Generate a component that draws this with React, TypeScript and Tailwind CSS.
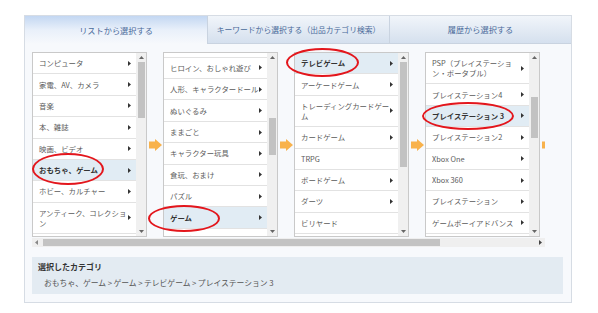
import React from "react";

type Item = { lines: string[]; arrow?: boolean; sel?: boolean };

function Tri() {
  return (
    <svg width="3" height="5" viewBox="0 0 3 5" className="shrink-0">
      <polygon points="0,0 3,2.5 0,5" fill="#333" />
    </svg>
  );
}

function Arrow() {
  return (
    <svg width="13" height="12" viewBox="0 0 13 12" className="shrink-0">
      <polygon points="0,2.5 6,2.5 6,0 13,6 6,12 6,9.5 0,9.5" fill="#f8b24c" />
    </svg>
  );
}

function Row({ it }: { it: Item }) {
  return (
    <div
      className={
        it.sel
          ? "flex items-center border-b border-[#e2e2e2] bg-[#e1ecf4] py-[5.2px] pl-[6px] pr-[5px] text-[7.4px] leading-[10px] font-bold text-[#333]"
          : "flex items-center border-b border-[#e2e2e2] bg-white py-[5.2px] pl-[6px] pr-[5px] text-[7.4px] leading-[10px] text-[#5a5a5a]"
      }
    >
      <div className="flex-1 whitespace-nowrap">
        {it.lines.map((l, i) => (
          <div key={i}>{l}</div>
        ))}
      </div>
      {it.arrow !== false && <Tri />}
    </div>
  );
}

function VScroll({ thumbClass }: { thumbClass: string }) {
  return (
    <div className="flex w-[10px] shrink-0 flex-col bg-[#f0f0f0]">
      <div className="flex h-[9px] items-center justify-center">
        <svg width="5" height="3" viewBox="0 0 5 3">
          <polygon points="0,3 2.5,0 5,3" fill="#666" />
        </svg>
      </div>
      <div className="flex flex-1 justify-center">
        <div className={thumbClass} />
      </div>
      <div className="flex h-[9px] items-center justify-center">
        <svg width="5" height="3" viewBox="0 0 5 3">
          <polygon points="0,0 2.5,3 5,0" fill="#666" />
        </svg>
      </div>
    </div>
  );
}

function Box({
  items,
  offsetClass,
  thumbClass,
}: {
  items: Item[];
  offsetClass: string;
  thumbClass: string;
}) {
  return (
    <div className="flex h-[185px] w-[115px] shrink-0 border border-[#c9c9c9] bg-white">
      <div className="flex-1 overflow-hidden">
        <div className={offsetClass}>
          {items.map((it, i) => (
            <Row key={i} it={it} />
          ))}
        </div>
      </div>
      <VScroll thumbClass={thumbClass} />
    </div>
  );
}

function Gap() {
  return (
    <div className="flex w-[16px] shrink-0 items-center pl-[2px]">
      <Arrow />
    </div>
  );
}

const col1: Item[] = [
  { lines: ["コンピュータ"] },
  { lines: ["家電、AV、カメラ"] },
  { lines: ["音楽"] },
  { lines: ["本、雑誌"] },
  { lines: ["映画、ビデオ"] },
  { lines: ["おもちゃ、ゲーム"], sel: true },
  { lines: ["ホビー、カルチャー"] },
  { lines: ["アンティーク、コレクショ", "ン"] },
  { lines: ["スポーツ、レジャー"] },
];

const col2: Item[] = [
  { lines: ["おもちゃ"] },
  { lines: ["ヒロイン、おしゃれ遊び"] },
  { lines: ["人形、キャラクタードール"] },
  { lines: ["ぬいぐるみ"] },
  { lines: ["ままごと"] },
  { lines: ["キャラクター玩具"] },
  { lines: ["食玩、おまけ"] },
  { lines: ["パズル"] },
  { lines: ["ゲーム"], sel: true },
  { lines: ["テーブルゲーム"] },
];

const col3: Item[] = [
  { lines: ["テレビゲーム"], sel: true },
  { lines: ["アーケードゲーム"] },
  { lines: ["トレーディングカードゲー", "ム"] },
  { lines: ["カードゲーム"] },
  { lines: ["TRPG"], arrow: false },
  { lines: ["ボードゲーム"] },
  { lines: ["ダーツ"] },
  { lines: ["ビリヤード"], arrow: false },
  { lines: ["その他"], arrow: false },
];

const col4: Item[] = [
  { lines: ["PSP（プレイステーショ", "ン・ポータブル）"] },
  { lines: ["プレイステーション4"] },
  { lines: ["プレイステーション 3"], sel: true },
  { lines: ["プレイステーション2"] },
  { lines: ["Xbox One"] },
  { lines: ["Xbox 360"] },
  { lines: ["プレイステーション"] },
  { lines: ["ゲームボーイアドバンス"] },
  { lines: ["ゲームボーイ"] },
];

function Sep() {
  return <span className="mx-[1.5px]">&gt;</span>;
}

export default function App() {
  return (
    <div className="relative h-[313px] w-[598px] overflow-hidden bg-white font-['Noto_Sans_CJK_JP',sans-serif]">
      <div className="ml-[24px] mt-[15px] flex h-[288px] w-[548px] flex-col border border-[#d6dce4] bg-[#f7f9fc]">
        {/* tabs */}
        <div className="flex h-[28px] shrink-0">
          <div className="flex w-[182px] items-center justify-center bg-gradient-to-b from-[#c3d7f2] via-[#e9f0fa] to-[#f7f9fc] text-[8.2px] text-[#4a6a9a]">
            リストから選択する
          </div>
          <div className="flex w-[182px] items-center justify-center border-b border-l border-[#c9d3e0] bg-gradient-to-b from-[#f1f5fa] to-[#d5e0ee] text-[7.8px] text-[#4a6a9a]">
            キーワードから選択する（出品カテゴリ検索）
          </div>
          <div className="flex flex-1 items-center justify-center border-b border-l border-[#c9d3e0] bg-gradient-to-b from-[#f1f5fa] to-[#d5e0ee] text-[8.2px] text-[#4a6a9a]">
            履歴から選択する
          </div>
        </div>

        <div className="flex flex-1 flex-col px-[7px] pt-[8px]">
          <div className="w-[513px] overflow-hidden">
            <div className="flex">
              <Box items={col1} offsetClass="mt-0" thumbClass="h-[56px] w-[7px] bg-[#c2c2c2]" />
              <Gap />
              <Box items={col2} offsetClass="-mt-[16.7px]" thumbClass="mt-[56px] h-[37px] w-[7px] bg-[#c2c2c2]" />
              <Gap />
              <Box items={col3} offsetClass="mt-0" thumbClass="h-[105px] w-[7px] bg-[#c2c2c2]" />
              <Gap />
              <Box items={col4} offsetClass="mt-0" thumbClass="mt-[35px] h-[41px] w-[7px] bg-[#c2c2c2]" />
              <Gap />
            </div>
          </div>
          {/* horizontal scrollbar */}
          <div className="mt-[1px] flex h-[9px] w-[513px] items-center bg-[#efefef]">
            <div className="flex w-[9px] justify-center">
              <svg width="3" height="5" viewBox="0 0 3 5">
                <polygon points="3,0 0,2.5 3,5" fill="#888" />
              </svg>
            </div>
            <div className="ml-[2px] h-[7px] w-[397px] bg-[#c3c3c3]" />
            <div className="flex-1" />
            <div className="flex w-[9px] justify-center">
              <svg width="3" height="5" viewBox="0 0 3 5">
                <polygon points="0,0 3,2.5 0,5" fill="#444" />
              </svg>
            </div>
          </div>

          {/* selected category */}
          <div className="mt-[10px] h-[37px] w-[531px] bg-[#e3ebf2]">
            <div className="pl-[6px] pt-[5px] text-[8px] leading-[10px] font-bold text-[#333]">
              選択したカテゴリ
            </div>
            <div className="mt-[5.5px] whitespace-nowrap pl-[12px] text-[7.8px] leading-[10px] text-[#555]">
              おもちゃ、ゲーム<Sep />ゲーム<Sep />テレビゲーム<Sep />プレイステーション 3
            </div>
          </div>
        </div>
      </div>

      {/* red annotation ellipses */}
      <div className="absolute left-[32px] top-[153px] h-[32px] w-[72px] rounded-[50%] border-[2.5px] border-[#e3161c]" />
      <div className="absolute left-[148px] top-[205px] h-[27px] w-[72px] rounded-[50%] border-[2.5px] border-[#e3161c]" />
      <div className="absolute left-[286px] top-[48px] h-[29px] w-[73px] rounded-[50%] border-[2.5px] border-[#e3161c]" />
      <div className="absolute left-[422px] top-[102px] h-[28px] w-[92px] rounded-[50%] border-[2.5px] border-[#e3161c]" />
    </div>
  );
}
